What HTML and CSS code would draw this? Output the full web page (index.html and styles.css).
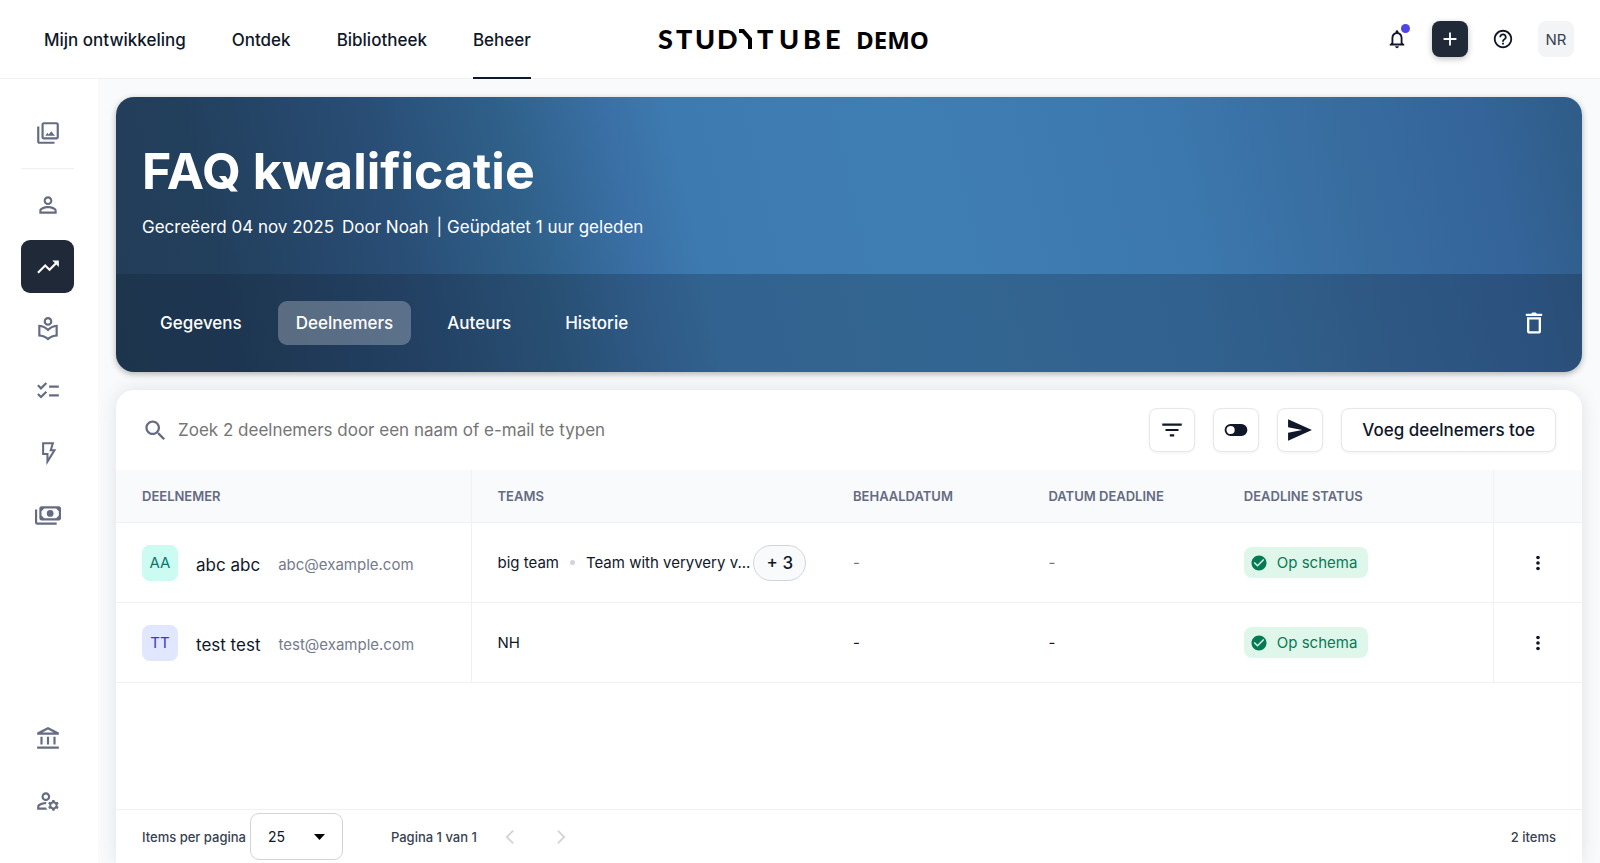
FILE: index.html
```html
<!DOCTYPE html>
<html lang="nl">
<head>
    <meta charset="UTF-8">
    <meta name="viewport" content="width=device-width, initial-scale=1">
    <title>FAQ kwalificatie</title>
    <link rel="stylesheet" href="styles.css">
</head>
<body>
<header class="topbar">
    <nav class="mainnav">
        <a href="#">Mijn ontwikkeling</a>
        <a href="#">Ontdek</a>
        <a href="#">Bibliotheek</a>
        <a href="#" class="active">Beheer</a>
    </nav>
    <a href="#" class="logo" aria-label="Studytube demo">
        <svg width="284" height="44" viewBox="0 0 284 44">
            <text class="logo-main" y="32" x="0 18 37 59">STUD</text>
            <path d="M81 14h4l7 8V32" fill="none" stroke="#000" stroke-width="4"/>
            <text class="logo-main" y="32" x="99 121 145 167">TUBE</text>
            <text class="logo-demo" x="198" y="32">DEMO</text>
        </svg>
    </a>
    <div class="tools">
        <button class="toolbtn bell" aria-label="Meldingen">
            <svg class="ico22" viewBox="0 0 24 24"><path d="M12 22c1.100 0 2-.9 2-2h-4c0 1.100.9 2 2 2zm6-6v-5c0-3.070-1.630-5.640-4.500-6.320V4c0-.83-.67-1.500-1.500-1.500s-1.500.67-1.500 1.500v.68C7.640 5.360 6 7.920 6 11v5l-2 2v1h16v-1l-2-2zm-2 1H8v-6c0-2.480 1.510-4.500 4-4.500s4 2.020 4 4.500v6z"/></svg>
            <span class="bell-dot"></span>
        </button>
        <button class="toolbtn add" aria-label="Toevoegen">
            <svg class="ico22" viewBox="0 0 24 24"><path d="M19 13h-6v6h-2v-6H5v-2h6V5h2v6h6z"/></svg>
        </button>
        <button class="toolbtn" aria-label="Help">
            <svg class="ico22" viewBox="0 0 24 24"><path d="M11 18h2v-2h-2v2zm1-16C6.480 2 2 6.480 2 12s4.480 10 10 10 10-4.480 10-10S17.520 2 12 2zm0 18c-4.410 0-8-3.590-8-8s3.590-8 8-8 8 3.590 8 8-3.590 8-8 8zm0-14c-2.210 0-4 1.790-4 4h2c0-1.100.9-2 2-2s2 .9 2 2c0 2-3 1.750-3 5h2c0-2.250 3-2.500 3-5 0-2.210-1.790-4-4-4z"/></svg>
        </button>
        <button class="toolbtn user">NR</button>
    </div>
</header>
<div class="layout">
    <aside class="sidebar">
        <a href="#" aria-label="Media"><svg viewBox="0 0 24 24"><path d="M20 4v12H8V4h12m0-2H8c-1.100 0-2 .9-2 2v12c0 1.100.9 2 2 2h12c1.100 0 2-.9 2-2V4c0-1.100-.9-2-2-2zm-8.500 9.670l1.200 1.700 2.300-3.100L18.500 14.500h-9zM2 6v14c0 1.100.9 2 2 2h14v-2H4V6H2z"/></svg></a>
        <hr>
        <a href="#" aria-label="Gebruikers"><svg viewBox="0 0 24 24"><path d="M12 5.900c1.160 0 2.100.94 2.100 2.100s-.94 2.100-2.100 2.100S9.900 9.160 9.900 8s.94-2.100 2.100-2.100m0 9c2.970 0 6.100 1.460 6.100 2.100v1.100H5.900V17c0-.64 3.130-2.100 6.100-2.100M12 4C9.790 4 8 5.790 8 8s1.790 4 4 4 4-1.790 4-4-1.790-4-4-4zm0 9c-2.670 0-8 1.340-8 4v3h16v-3c0-2.660-5.330-4-8-4z"/></svg></a>
        <a href="#" class="active" aria-label="Kwalificaties"><svg viewBox="0 0 24 24"><path d="M16 6l2.290 2.290-4.880 4.880-4-4L2 16.590 3.410 18l6-6 4 4 6.300-6.290L22 12V6z"/></svg></a>
        <a href="#" aria-label="Leeraanbod"><svg viewBox="0 0 24 24"><path d="M16 5c0-2.210-1.790-4-4-4S8 2.790 8 5s1.790 4 4 4 4-1.790 4-4zm-4 2c-1.100 0-2-.9-2-2s.9-2 2-2 2 .9 2 2-.9 2-2 2zm0 4.550C9.640 9.350 6.480 8 3 8v11c3.480 0 6.640 1.350 9 3.550 2.360-2.190 5.520-3.550 9-3.550V8c-3.480 0-6.640 1.350-9 3.550zm7 5.580c-2.530.34-4.930 1.300-7 2.820-2.060-1.520-4.470-2.490-7-2.830v-6.950c2.100.38 4.050 1.350 5.640 2.830L12 14.280l1.360-1.270c1.590-1.480 3.540-2.450 5.640-2.830v6.950z"/></svg></a>
        <a href="#" aria-label="Taken"><svg viewBox="0 0 24 24"><path d="M22 7h-9v2h9V7zm0 8h-9v2h9v-2zM5.540 11L2 7.460l1.410-1.410 2.120 2.120 4.240-4.240 1.410 1.410L5.540 11zm0 8L2 15.460l1.410-1.410 2.120 2.120 4.240-4.240 1.410 1.410L5.540 19z"/></svg></a>
        <a href="#" aria-label="Automatisering"><svg viewBox="0 0 24 24"><path d="M7.500 3h9l-2 6.500h3.500L11.500 20v-7h-4z" fill="none" stroke="currentColor" stroke-width="1.900"/></svg></a>
        <a href="#" aria-label="Budgetten"><svg viewBox="0 0 24 24"><path fill-rule="evenodd" d="M6 4h16c1.100 0 2 .9 2 2v9c0 1.100-.9 2-2 2H6c-1.100 0-2-.9-2-2V6c0-1.100.9-2 2-2zm2.500 2L6 8.500v4L8.500 15h11l2.500-2.500v-4L19.500 6z"/><circle cx="14" cy="10.500" r="3.100"/><path d="M0 7v12c0 1.100.9 2 2 2h18v-2H2V7z"/></svg></a>
        <a href="#" class="bottom" aria-label="Academie"><svg viewBox="0 0 24 24"><path d="M7 10H5v7h2v-7zm6 0h-2v7h2v-7zm9 9H2v2h20v-2zm-3-9h-2v7h2v-7zm-7-6.740L17.210 6H6.790L12 3.260M12 1L2 6v2h20V6L12 1z"/></svg></a>
        <a href="#" aria-label="Accountbeheer"><svg viewBox="0 0 24 24"><path d="M4 18v-.65c0-.34.16-.66.41-.81C6.100 15.530 8.030 15 10 15c.03 0 .05 0 .08.01.1-.7.3-1.370.59-1.980-.22-.02-.44-.03-.67-.03-2.420 0-4.680.67-6.610 1.820-.88.52-1.390 1.500-1.390 2.530V20h9.260c-.42-.6-.75-1.280-.97-2H4zM10 12c2.210 0 4-1.790 4-4s-1.790-4-4-4-4 1.790-4 4 1.790 4 4 4zm0-6c1.100 0 2 .9 2 2s-.9 2-2 2-2-.9-2-2 .9-2 2-2zm10.750 10c0-.22-.03-.42-.06-.63l1.140-1.010-1-1.730-1.450.49c-.32-.27-.68-.48-1.080-.63L18 11h-2l-.3 1.490c-.4.15-.76.36-1.080.63l-1.450-.49-1 1.730 1.140 1.010c-.03.21-.06.41-.06.63s.03.42.06.63l-1.140 1.010 1 1.730 1.450-.49c.32.27.68.48 1.080.63L16 21h2l.3-1.490c.4-.15.76-.36 1.080-.63l1.450.49 1-1.730-1.140-1.010c.03-.21.06-.41.06-.63zM17 18c-1.100 0-2-.9-2-2s.9-2 2-2 2 .9 2 2-.9 2-2 2z"/></svg></a>
    </aside>
    <main class="content">
        <section class="hero">
            <div class="hero-top">
                <h1>FAQ kwalificatie</h1>
                <p><span>Gecreëerd 04 nov 2025</span><span>Door Noah</span><span>| Geüpdatet 1 uur geleden</span></p>
            </div>
            <div class="hero-tabs">
                <a href="#">Gegevens</a>
                <a href="#" class="active">Deelnemers</a>
                <a href="#">Auteurs</a>
                <a href="#">Historie</a>
                <button class="trash" aria-label="Verwijderen">
                    <svg viewBox="0 0 24 24"><path d="M6 19c0 1.100.9 2 2 2h8c1.100 0 2-.9 2-2V7H6v12zM8 9h8v10H8V9zm6.500-5l-1-1h-3l-1 1H5v2h14V4z"/></svg>
                </button>
            </div>
        </section>
        <section class="card">
            <div class="toolbar">
                <label class="search">
                    <svg viewBox="0 0 24 24"><path d="M15.500 14h-.79l-.28-.27C15.410 12.590 16 11.110 16 9.500 16 5.910 13.090 3 9.500 3S3 5.910 3 9.500 5.910 16 9.500 16c1.610 0 3.090-.59 4.230-1.570l.27.28v.79l5 4.990L20.490 19l-4.990-5zm-6 0C7.010 14 5 11.990 5 9.500S7.010 5 9.500 5 14 7.010 14 9.500 11.990 14 9.500 14z"/></svg>
                    <input type="text" placeholder="Zoek 2 deelnemers door een naam of e-mail te typen" aria-label="Zoek deelnemers">
                </label>
                <button class="btn icon" aria-label="Filter"><svg viewBox="0 0 24 24"><path d="M10 18h4v-2h-4v2zM3 6v2h18V6H3zm3 7h12v-2H6v2z"/></svg></button>
                <button class="btn icon" aria-label="Status wijzigen"><svg viewBox="0 0 24 24"><path fill-rule="evenodd" d="M7 6.500h10a5.500 5.500 0 0 1 0 11H7a5.500 5.500 0 0 1 0-11zm0 1.700a3.800 3.800 0 1 0 0 7.600 3.800 3.800 0 0 0 0-7.600z"/></svg></button>
                <button class="btn icon" aria-label="Verstuur"><svg viewBox="0 0 24 24"><path d="M1 22l22-10L1 2v7.500l13 2.500-13 2.500z"/></svg></button>
                <button class="btn">Voeg deelnemers toe</button>
            </div>
            <table class="people">
                <colgroup>
                    <col class="c-name"><col class="c-teams"><col class="c-date"><col class="c-date"><col class="c-status"><col class="c-menu">
                </colgroup>
                <thead>
                <tr>
                    <th class="line">DEELNEMER</th>
                    <th>TEAMS</th>
                    <th>BEHAALDATUM</th>
                    <th>DATUM DEADLINE</th>
                    <th class="line">DEADLINE STATUS</th>
                    <th></th>
                </tr>
                </thead>
                <tbody>
                <tr>
                    <td class="line">
                        <div class="person"><span class="avatar green">AA</span><span class="name">abc abc</span><span class="mail">abc@example.com</span></div>
                    </td>
                    <td>
                        <div class="teams"><span>big team</span><i class="dot"></i><span>Team with veryvery v...</span><button class="more">+ 3</button></div>
                    </td>
                    <td class="muted">-</td>
                    <td class="muted">-</td>
                    <td class="line"><span class="status"><svg viewBox="0 0 24 24"><path d="M12 2C6.480 2 2 6.480 2 12s4.480 10 10 10 10-4.480 10-10S17.520 2 12 2zm-2 15l-5-5 1.410-1.410L10 14.170l7.590-7.590L19 8l-9 9z"/></svg>Op schema</span></td>
                    <td class="menu"><button aria-label="Acties"><svg viewBox="0 0 24 24"><circle cx="12" cy="6" r="2"/><circle cx="12" cy="12" r="2"/><circle cx="12" cy="18" r="2"/></svg></button></td>
                </tr>
                <tr>
                    <td class="line">
                        <div class="person"><span class="avatar purple">TT</span><span class="name">test test</span><span class="mail">test@example.com</span></div>
                    </td>
                    <td>NH</td>
                    <td>-</td>
                    <td>-</td>
                    <td class="line"><span class="status"><svg viewBox="0 0 24 24"><path d="M12 2C6.480 2 2 6.480 2 12s4.480 10 10 10 10-4.480 10-10S17.520 2 12 2zm-2 15l-5-5 1.410-1.410L10 14.170l7.590-7.590L19 8l-9 9z"/></svg>Op schema</span></td>
                    <td class="menu"><button aria-label="Acties"><svg viewBox="0 0 24 24"><circle cx="12" cy="6" r="2"/><circle cx="12" cy="12" r="2"/><circle cx="12" cy="18" r="2"/></svg></button></td>
                </tr>
                </tbody>
            </table>
            <div class="pager">
                <label for="perPage">Items per pagina</label>
                <select id="perPage">
                    <option>25</option>
                    <option>50</option>
                    <option>100</option>
                </select>
                <span class="page">Pagina 1 van 1</span>
                <button aria-label="Vorige" disabled><svg viewBox="0 0 24 24"><path d="M15.500 5L8.500 12l7 7"/></svg></button>
                <button aria-label="Volgende" disabled><svg viewBox="0 0 24 24"><path d="M8.500 5l7 7-7 7"/></svg></button>
                <span class="total">2 items</span>
            </div>
        </section>
    </main>
</div>
</body>
</html>
```
FILE: styles.css
```css
*{
    box-sizing: border-box;
}
body{
    margin: 0;
    height: 100vh;
    display: flex;
    flex-direction: column;
    font-family: Inter, "Liberation Sans", sans-serif;
    font-size: 15px;
    color: #0f1729;
    background: #f9fafc;
}
a{
    color: inherit;
    text-decoration: none;
}
button{
    font-family: inherit;
    color: inherit;
    border: 0;
    background: none;
    padding: 0;
    cursor: pointer;
}
svg{
    display: block;
    fill: currentColor;
}

/* top bar */
.topbar{
    flex: none;
    height: 79px;
    display: grid;
    grid-template-columns: 1fr auto 1fr;
    background: #fff;
    border-bottom: 1px solid #f0f1f3;
    padding: 0 26px;
}
.mainnav{
    display: flex;
    gap: 46px;
    padding-left: 18px;
    margin-bottom: -1px;
    font-size: 17px;
    font-weight: 500;
    white-space: nowrap;
}
.mainnav a{
    display: flex;
    align-items: center;
    border-top: 2px solid transparent;
    border-bottom: 2px solid transparent;
}
.mainnav a.active{
    border-bottom-color: #0f1729;
}
.logo{
    align-self: center;
}
.logo svg{
    fill: #000;
}
.logo-main{
    font: 900 27px Lato, sans-serif;
}
.logo-demo{
    font: bold 24px "Open Sans", sans-serif;
}
.tools{
    display: flex;
    align-items: center;
    justify-content: flex-end;
    gap: 17px;
}
.toolbtn{
    position: relative;
    width: 36px;
    height: 36px;
    display: flex;
    align-items: center;
    justify-content: center;
    border-radius: 8px;
}
.ico22{
    width: 22px;
    height: 22px;
}
.bell-dot{
    position: absolute;
    top: 3px;
    right: 5px;
    width: 9px;
    height: 9px;
    border-radius: 50%;
    background: #4f46e5;
}
.toolbtn.add{
    background: #1f2937;
    color: #fff;
    box-shadow: 0 2px 6px rgba(0,0,0,.25);
}
.toolbtn.user{
    background: #f3f4f6;
    color: #374151;
    font-size: 15px;
}

/* side bar */
.layout{
    flex: 1;
    min-height: 0;
    display: flex;
}
.sidebar{
    flex: none;
    width: 98px;
    padding: 27px 24px 36px 21px;
    display: flex;
    flex-direction: column;
    gap: 9px;
    background: #fff;
    color: #646b82;
}
.sidebar a{
    height: 53px;
    display: flex;
    align-items: center;
    justify-content: center;
    border-radius: 9px;
}
.sidebar svg{
    width: 26px;
    height: 26px;
}
.sidebar hr{
    width: 100%;
    margin: 0;
    border: 0;
    border-top: 1px solid #eeeff2;
}
.sidebar a.active{
    background: #1f2937;
    color: #fff;
}
.sidebar a.bottom{
    margin-top: auto;
}

/* page header */
.content{
    flex: 1;
    min-width: 0;
    padding: 18px 18px 0;
    display: flex;
    flex-direction: column;
    gap: 18px;
}
.hero{
    flex: none;
    overflow: hidden;
    border-radius: 18px;
    color: #fff;
    background: linear-gradient(77deg, #223d58 0%, #223f5c 8%, #294d75 20%, #2f6089 29%, #3a70a6 36%, #3d7aaf 40%, #3f7eb3 55%, #3c78ae 72%, #386c9f 84%, #34649a 93%, #2f5c86 100%);
    box-shadow: 0 2px 6px rgba(0,0,0,.3);
}
.hero-top{
    height: 177px;
    padding: 42px 26px 0;
}
.hero h1{
    margin: 0;
    font-size: 50px;
    line-height: 64px;
    font-weight: 700;
}
.hero p{
    margin: 12px 0 0;
    display: flex;
    gap: 8px;
    font-size: 17px;
    line-height: 24px;
}
.hero-tabs{
    height: 98px;
    padding: 0 26px;
    display: flex;
    align-items: center;
    gap: 18px;
    background: rgba(15,23,41,.24);
}
.hero-tabs a{
    padding: 0 18px;
    line-height: 44px;
    border-radius: 9px;
    font-size: 17px;
    font-weight: 500;
}
.hero-tabs a.active{
    background: rgba(255,255,255,.26);
}
.trash{
    margin-left: auto;
    padding: 8px;
}
.trash svg{
    width: 28px;
    height: 28px;
}

/* participants */
.card{
    flex: 1;
    min-height: 0;
    display: flex;
    flex-direction: column;
    background: #fff;
    border-radius: 18px 18px 0 0;
    box-shadow: 0 0 18px rgba(15,23,41,.1);
}
.toolbar{
    display: flex;
    gap: 18px;
    padding: 18px 26px;
}
.search{
    flex: 1;
    display: flex;
    align-items: center;
    gap: 9px;
    color: #646b82;
}
.search svg{
    width: 27px;
    height: 27px;
}
.search input{
    flex: 1;
    border: 0;
    outline: 0;
    padding: 0;
    font: 17px Inter, "Liberation Sans", sans-serif;
    color: #0f1729;
}
.search input::placeholder{
    color: #757575;
}
.btn{
    height: 44px;
    padding: 0 20px;
    border: 1px solid #e5e7eb;
    border-radius: 8px;
    background: #fff;
    font-size: 17px;
    font-weight: 500;
    box-shadow: 0 1px 3px rgba(0,0,0,.06);
}
.btn.icon{
    padding: 0 9px;
}
.btn.icon svg{
    width: 26px;
    height: 26px;
}
.people{
    width: 100%;
    table-layout: fixed;
    border-collapse: separate;
    border-spacing: 0;
}
.c-name, .c-teams{
    width: 24.250%;
}
.c-date{
    width: 13.330%;
}
.c-menu{
    width: 88px;
}
.people th{
    height: 53px;
    padding: 0 26px;
    text-align: left;
    font-size: 13px;
    font-weight: 600;
    color: #646b82;
    background: #f9fafc;
    border-bottom: 1px solid #f0f1f4;
}
.people td{
    height: 80px;
    padding: 0 26px;
    border-bottom: 1px solid #f0f1f4;
}
.people .line{
    border-right: 1px solid #f0f1f4;
}
.people td.muted{
    color: #757575;
}
.person{
    display: flex;
    align-items: center;
    gap: 18px;
    white-space: nowrap;
}
.avatar{
    width: 36px;
    height: 36px;
    border-radius: 8px;
    line-height: 36px;
    text-align: center;
}
.avatar.green{
    background: #ccfbf1;
    color: #0f766e;
}
.avatar.purple{
    background: #e0e7ff;
    color: #4338ca;
}
.name, .mail{
    padding-top: 4px;
}
.name{
    font-size: 17px;
}
.mail{
    color: #757a8c;
}
.teams{
    display: flex;
    align-items: center;
    white-space: nowrap;
}
.dot{
    flex: none;
    width: 5px;
    height: 5px;
    margin: 0 11px;
    border-radius: 50%;
    background: #d1d5db;
}
.more{
    flex: none;
    width: 53px;
    height: 36px;
    margin-left: 3px;
    border: 1px solid #d1d5db;
    border-radius: 18px;
    background: #f9fafc;
    font-size: 17px;
    font-weight: 500;
}
.status{
    display: inline-flex;
    align-items: center;
    gap: 9px;
    height: 31px;
    padding: 0 11px 0 6px;
    border-radius: 8px;
    background: #def7ea;
    color: #057a55;
}
.status svg{
    width: 18px;
    height: 18px;
}
.people td.menu{
    padding: 0;
}
.menu button{
    display: block;
    margin: 0 auto;
}
.menu svg{
    width: 22px;
    height: 22px;
}

/* pagination */
.pager{
    margin-top: auto;
    height: 54px;
    padding: 0 26px;
    display: flex;
    align-items: center;
    border-top: 1px solid #f0f1f4;
    font-size: 13px;
    font-weight: 500;
    color: #374151;
}
.pager select{
    appearance: none;
    width: 93px;
    height: 47px;
    margin: 0 48px 0 4px;
    padding: 0 17px;
    border: 1px solid #d1d5db;
    border-radius: 9px;
    font: 14px Inter, "Liberation Sans", sans-serif;
    color: #0f1729;
    background: #fff url("data:image/svg+xml,%3Csvg xmlns='http://www.w3.org/2000/svg' viewBox='0 0 11 6'%3E%3Cpath d='M0 0h11L5.500 6z'/%3E%3C/svg%3E") no-repeat right 17px center / 11px 6px;
}
.pager button{
    margin-left: 25px;
    color: #d1d5db;
}
.pager .page + button{
    margin-left: 20px;
}
.pager svg{
    width: 26px;
    height: 22px;
    fill: none;
    stroke: currentColor;
    stroke-width: 2;
}
.total{
    margin-left: auto;
}
```
